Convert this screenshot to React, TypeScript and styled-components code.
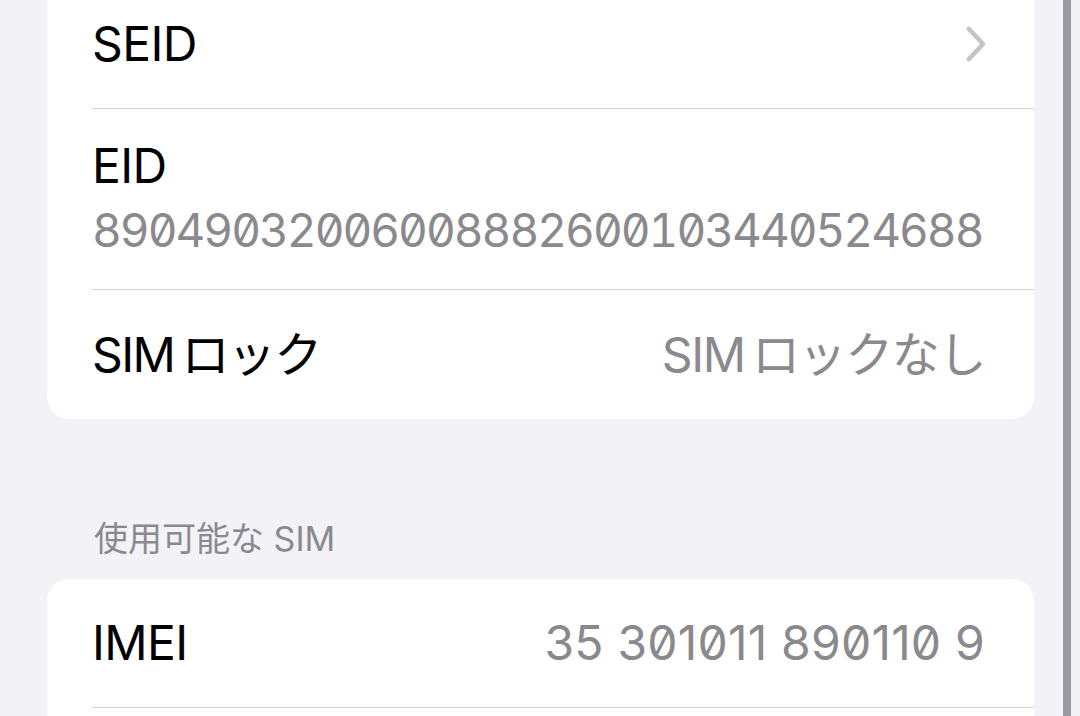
import React from 'react';
import styled, { createGlobalStyle } from 'styled-components';

const GlobalStyle = createGlobalStyle`
  html, body {
    margin: 0;
    padding: 0;
    background: #f2f2f7;
  }
  body {
    font-family: Inter, "Noto Sans CJK JP", sans-serif;
    -webkit-font-smoothing: antialiased;
  }
`;

const Page = styled.div`
  display: flex;
  height: 100vh;
  overflow: hidden;
  background: #f2f2f7;
`;

const Screen = styled.div`
  width: 1063px;
  flex-shrink: 0;
  box-sizing: border-box;
  padding: 0 29px 0 47px;
  overflow: hidden;
`;

// thin dark strip along the right side of the screen
const Edge = styled.div`
  width: 8px;
  flex-shrink: 0;
  background: #9b9aa0;
`;

// list is scrolled a little, so the first group starts above the top
const Scroller = styled.div`
  margin-top: -20px;
`;

const Group = styled.div`
  background: #ffffff;
  border-radius: 22px;
  overflow: hidden;
`;

const Row = styled.div<{ $tall?: boolean }>`
  margin-left: 45px;
  padding-right: 49px;
  min-height: 129px;
  display: flex;
  flex-direction: ${(p) => (p.$tall ? 'column' : 'row')};
  align-items: ${(p) => (p.$tall ? 'flex-start' : 'center')};
  justify-content: ${(p) => (p.$tall ? 'flex-start' : 'space-between')};
  box-sizing: border-box;
  padding-top: ${(p) => (p.$tall ? '28px' : '0')};
  padding-bottom: ${(p) => (p.$tall ? '30px' : '0')};
  border-bottom: 1px solid #d1d1d6;

  &:last-child {
    border-bottom: none;
  }
`;

const Label = styled.span<{ $tight?: boolean }>`
  font-size: 48px;
  line-height: 58px;
  color: #000000;
  letter-spacing: ${(p) => (p.$tight ? '-1.6px' : '-0.6px')};
  white-space: nowrap;
`;

const Value = styled.span<{ $tight?: boolean }>`
  font-size: 48px;
  line-height: 58px;
  color: #8a8a8e;
  font-feature-settings: 'zero' 1;
  letter-spacing: ${(p) => (p.$tight ? '-1.4px' : '0.2px')};
  white-space: nowrap;
`;

const Code = styled.span`
  margin-top: 6px;
  font-size: 46px;
  line-height: 58px;
  color: #8a8a8e;
  font-feature-settings: 'tnum' 1, 'zero' 1;
  letter-spacing: -2px;
  white-space: nowrap;
`;

const Chevron = styled.svg`
  width: 20px;
  height: 36px;
  margin-right: -1px;
`;

const SectionHeader = styled.div`
  margin: 100px 0 20px;
  padding-left: 47px;
  font-size: 34px;
  line-height: 40px;
  color: #8a8a8e;
`;

export default function App() {
  return (
    <Page>
      <GlobalStyle />
      <Screen>
        <Scroller>
          <Group>
            <Row>
              <Label>SEID</Label>
              <Chevron viewBox="0 0 20 36" fill="none">
                <path
                  d="M3 3 L17 18 L3 33"
                  stroke="#c4c4c7"
                  strokeWidth="4.5"
                  strokeLinecap="round"
                  strokeLinejoin="round"
                />
              </Chevron>
            </Row>
            <Row $tall>
              <Label>EID</Label>
              <Code>89049032006008882600103440524688</Code>
            </Row>
            <Row>
              <Label $tight>SIM{'\u2009'}ロック</Label>
              <Value $tight>SIM{'\u2009'}ロックなし</Value>
            </Row>
          </Group>

          <SectionHeader>使用可能な SIM</SectionHeader>

          <Group>
            <Row>
              <Label>IMEI</Label>
              <Value>35 301011 890110 9</Value>
            </Row>
            {/* next row continues below the fold */}
            <Row />
          </Group>
        </Scroller>
      </Screen>
      <Edge />
    </Page>
  );
}
